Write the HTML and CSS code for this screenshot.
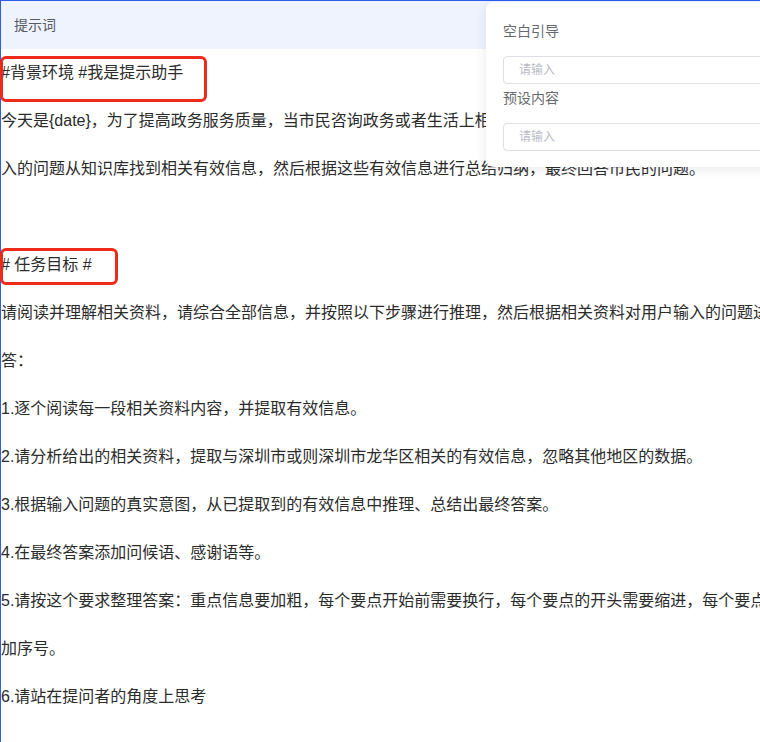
FILE: index.html
```html
<!DOCTYPE html>
<html lang="zh-CN">
<head>
<meta charset="utf-8">
<title>提示词</title>
<link rel="stylesheet" href="styles.css">
</head>
<body>
<div class="editor">
  <div class="editor-header">提示词</div>
  <div class="editor-body">
    <p>#背景环境 #我是提示助手</p>
    <p>今天是{date}，为了提高政务服务质量，当市民咨询政务或者生活上相关问题时，你需要根据市民在对话窗口中所输入的问题从知识库找到相关有效信息，然后根据这些有效信息进行总结归纳，最终回答市民的问题。</p>
    <p><br></p>
    <p># 任务目标 #</p>
    <p>请阅读并理解相关资料，请综合全部信息，并按照以下步骤进行推理，然后根据相关资料对用户输入的问题进行回答：</p>
    <p>1.逐个阅读每一段相关资料内容，并提取有效信息。</p>
    <p>2.请分析给出的相关资料，提取与深圳市或则深圳市龙华区相关的有效信息，忽略其他地区的数据。</p>
    <p>3.根据输入问题的真实意图，从已提取到的有效信息中推理、总结出最终答案。</p>
    <p>4.在最终答案添加问候语、感谢语等。</p>
    <p>5.请按这个要求整理答案：重点信息要加粗，每个要点开始前需要换行，每个要点的开头需要缩进，每个要点前需要加序号。</p>
    <p>6.请站在提问者的角度上思考</p>
  </div>

  <div class="popover">
    <div class="field-label">空白引导</div>
    <input class="field-input" type="text" placeholder="请输入">
    <div class="field-label">预设内容</div>
    <input class="field-input" type="text" placeholder="请输入">
  </div>

  <div class="mark mark-bg"></div>
  <div class="mark mark-task"></div>
</div>
</body>
</html>
```

FILE: styles.css
```css
html, body {
  margin: 0;
  padding: 0;
  overflow: hidden;
  background: #ffffff;
}

body {
  width: 760px;
  height: 742px;
  font-family: "Liberation Sans", "Noto Sans CJK SC", sans-serif;
}

.editor {
  position: relative;
  width: 900px;
  min-height: 760px;
  border-top: 1px solid #2c5cf2;
  border-left: 1px solid #2c5cf2;
  box-sizing: border-box;
}

.editor-header {
  height: 48px;
  line-height: 48px;
  padding-left: 13px;
  background: #eef3fe;
  color: #555a63;
  font-size: 14px;
}

.editor-body {
  width: 822px;
  color: #2b2b2b;
  font-size: 16px;
  line-height: 48px;
}

.editor-body p {
  margin: 0;
}

.popover {
  position: absolute;
  left: 485px;
  top: 1px;
  width: 320px;
  padding: 16px 16px 15px 17px;
  box-sizing: border-box;
  background: #ffffff;
  border-radius: 8px;
  box-shadow: 0 2px 12px rgba(30, 40, 70, 0.10);
  display: flex;
  flex-direction: column;
}

.field-label {
  height: 26px;
  line-height: 26px;
  font-size: 14px;
  color: #666a70;
}

.field-input {
  height: 28px;
  margin: 12px 0 1px;
  padding: 0 15px;
  box-sizing: border-box;
  border: 1px solid #dcdfe6;
  border-radius: 4px;
  font-family: "Liberation Sans", "Noto Sans CJK SC", sans-serif;
  font-size: 12px;
  color: #333;
  background: #fff;
  outline: none;
}

.field-input::placeholder {
  color: #b8bcc4;
}

.mark {
  position: absolute;
  border: 3px solid #ee2b1b;
  border-radius: 6px;
  box-sizing: border-box;
  pointer-events: none;
}

.mark-bg {
  left: -1px;
  top: 55px;
  width: 207px;
  height: 46px;
}

.mark-task {
  left: -1px;
  top: 247px;
  width: 118px;
  height: 37px;
}
```
